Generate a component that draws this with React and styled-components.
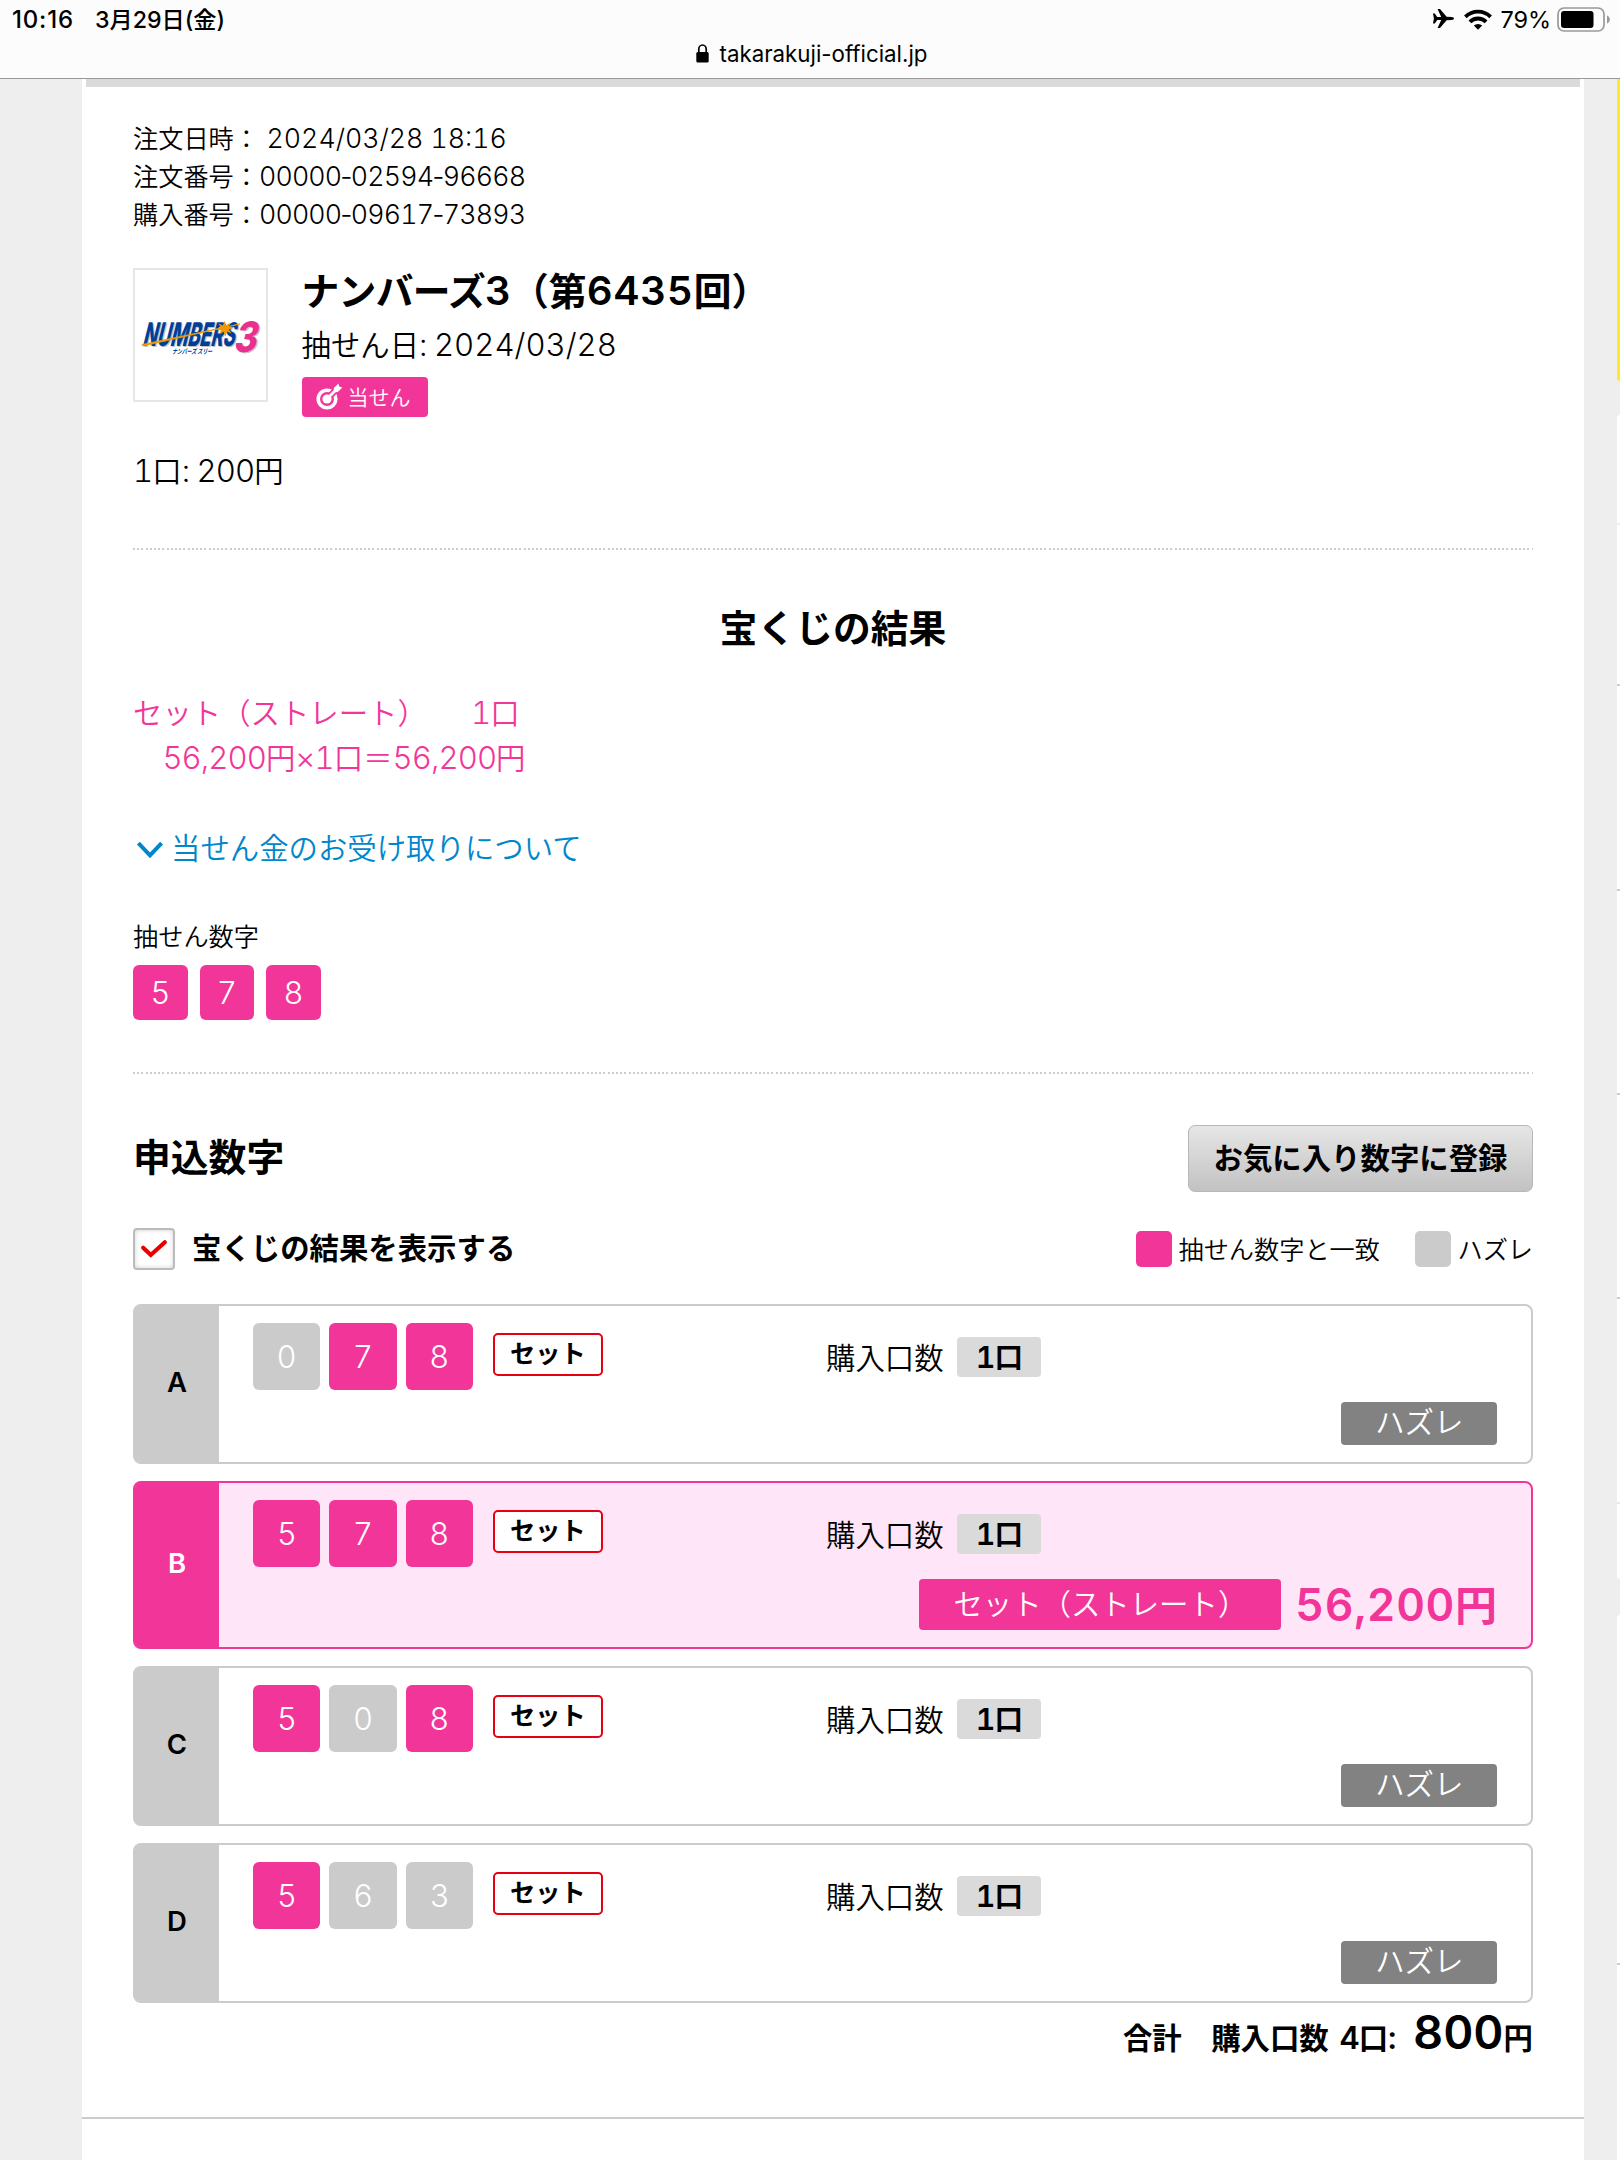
import React from 'react';
import styled, {createGlobalStyle} from 'styled-components';

const PINK = '#f23699';
const GRAY = '#cbcbcb';

const GlobalStyle = createGlobalStyle`
    * {
        box-sizing: border-box;
    }

    body {
        margin: 0;
        background-color: #eeeeee;
        color: #000000;
        font-family: "Noto Sans CJK JP", sans-serif;
        font-weight: 350;
        font-size: 29.4px;
    }

    h1, h2, p {
        margin: 0;
    }
`;

const Screen = styled.div`
    width: 1620px;
    height: 2160px;
    overflow: hidden;
    display: flex;
    flex-direction: column;
`;

// Latin digits, wider than the ones in the Japanese font
const Num = styled.span`
    font-family: Inter, sans-serif;
    font-size: ${props => props.$size || 1.06}em;
    letter-spacing: ${props => props.$gap ?? -0.03}em;
    margin-left: ${props => props.$left || 0}px;
    font-variant-numeric: tabular-nums;
    line-height: 0;
`;

const Hyphen = styled.span`
    margin: 0 -0.13em;
`;

const StatusBar = styled.header`
    flex: none;
    height: 79px;
    background-color: #fcfcfc;
    border-bottom: 1px solid #999999;
    font-size: 24px;
    font-weight: 500;
`;

const StatusRow = styled.div`
    display: flex;
    align-items: center;
    height: 38px;
    padding: 0 8.6px 0 12px;
`;

const Time = styled.span`
    width: 83px;
    font-family: Inter, sans-serif;
    letter-spacing: 0.8px;
`;

const StatusDate = styled.span`
    flex: 1;
    padding-bottom: 2px;
    font-family: Inter, "Noto Sans CJK JP", sans-serif;
    font-size: 23.2px;
`;

const StatusIcons = styled.div`
    display: flex;
    align-items: center;
    font-family: Inter, sans-serif;
    font-weight: 400;
    font-size: 23.5px;
`;

const WifiSlot = styled.span`
    display: flex;
    margin-left: 9px;
`;

const Percent = styled.span`
    width: 57px;
    margin-left: 8px;
`;

const Address = styled.div`
    display: flex;
    align-items: center;
    justify-content: center;
    gap: 10px;
    height: 31px;
    padding-left: 4px;
    font-family: Inter, sans-serif;
    font-weight: 400;
    font-size: 22.3px;
`;

const Body = styled.div`
    flex: 1;
    display: flex;
    padding-left: 82px;
    overflow: hidden;
`;

const Main = styled.main`
    width: 1502px;
    background-color: #ffffff;
`;

const TopStrip = styled.div`
    height: 8px;
    margin: 0 4px;
    background-color: #dadada;
`;

const Content = styled.div`
    padding: 31px 51px 58px;
    border-bottom: 2px solid #cccccc;
`;

const OrderLine = styled.p`
    font-size: 25.2px;
    line-height: 38px;
`;

const Product = styled.section`
    display: flex;
    align-items: flex-start;
    margin-top: 36px;
`;

const Thumb = styled.div`
    width: 134.5px;
    height: 134px;
    border: 2px solid #e6e6e6;
    margin-right: 34px;
`;

const Title = styled.h1`
    font-size: 37.8px;
    font-weight: 600;
    line-height: 42px;
`;

const TitleKana = styled.span`
    letter-spacing: -0.7px;
`;

const DrawDate = styled.p`
    margin-top: 11px;
    line-height: 44px;
`;

const WinBadge = styled.div`
    display: flex;
    align-items: center;
    width: 126px;
    height: 40px;
    margin-top: 12px;
    padding: 0 0 3px 14px;
    gap: 5px;
    border-radius: 4px;
    background-color: ${PINK};
    color: #ffffff;
    font-size: 21px;
`;

const UnitPrice = styled.p`
    margin-top: 30px;
    line-height: 44px;
`;

const Divider = styled.div`
    margin-top: ${props => props.$top}px;
    height: 2px;
    background: repeating-linear-gradient(90deg, #cccccc 0 2.1px, transparent 2.1px 4.2px);
`;

const ResultTitle = styled.h2`
    margin-top: 48px;
    font-size: 37.8px;
    font-weight: 600;
    line-height: 56px;
    text-align: center;
`;

const Prize = styled.div`
    margin-top: 35px;
    color: ${PINK};
    line-height: 44.5px;
`;

const PrizeUnits = styled.span`
    margin-left: 44px;
`;

const AboutLink = styled.a`
    display: flex;
    align-items: center;
    gap: 7px;
    margin-top: 46px;
    padding-left: 3px;
    line-height: 44px;
    color: #0086cc;
`;

const ChevronSlot = styled.span`
    display: flex;
    padding-top: 7px;
`;

const DrawLabel = styled.p`
    margin-top: 48px;
    font-size: 25.2px;
    line-height: 38px;
`;

const DrawDigits = styled.div`
    display: flex;
    gap: 12px;
    margin-top: 11px;
`;

const Digit = styled.span`
    display: flex;
    align-items: center;
    justify-content: center;
    width: ${props => props.$size}px;
    height: ${props => props.$size}px;
    border-radius: 6px;
    background-color: ${props => props.$hit ? PINK : GRAY};
    color: #ffffff;
    font-family: Inter, sans-serif;
    font-size: 31px;
`;

const SectionHead = styled.div`
    display: flex;
    align-items: center;
    justify-content: space-between;
    height: 67px;
    margin-top: 51px;
`;

const SectionTitle = styled.h2`
    font-size: 37.8px;
    font-weight: 600;
    line-height: 60px;
    padding-bottom: 6px;
`;

const FavoriteButton = styled.button`
    width: 345px;
    height: 67px;
    padding: 0 0 5px;
    border: 1px solid #b8b8b8;
    border-radius: 7px;
    background: linear-gradient(#e6e6e6, #c2c2c2);
    color: #000000;
    font: inherit;
    font-weight: 600;
`;

const Filter = styled.div`
    display: flex;
    align-items: center;
    height: 42px;
    margin: 36px 0 34px;
`;

const CheckBox = styled.span`
    display: flex;
    align-items: center;
    justify-content: center;
    width: 42px;
    height: 42px;
    border: 2px solid #bbbbbb;
    border-radius: 4px;
    background-color: #ffffff;
    box-shadow: inset 0 0 5px rgba(0, 0, 0, 0.18);
`;

const FilterLabel = styled.span`
    flex: 1;
    margin-left: 17px;
    padding-bottom: 5px;
    font-weight: 600;
`;

const Legend = styled.span`
    display: flex;
    align-items: center;
    gap: 6.5px;
    margin-left: 35px;
    font-size: 25.2px;
    line-height: 34px;

    &::before {
        content: '';
        width: 36px;
        height: 36px;
        border-radius: 5px;
        background-color: ${props => props.$hit ? PINK : GRAY};
    }
`;

const LegendText = styled.span`
    padding-bottom: 2px;
`;

const Entries = styled.div`
    display: flex;
    flex-direction: column;
    gap: 17px;
`;

const EntryCard = styled.div`
    display: flex;
    height: ${props => props.$win ? 168 : 160}px;
    border: 2px solid ${props => props.$win ? PINK : GRAY};
    border-radius: 8px;
    background-color: ${props => props.$win ? '#fee5f8' : '#ffffff'};
`;

const EntryLetter = styled.div`
    display: flex;
    align-items: center;
    justify-content: center;
    width: 84px;
    padding-bottom: 3px;
    border-radius: 5px 0 0 5px;
    background-color: ${props => props.$win ? PINK : GRAY};
    color: ${props => props.$win ? '#ffffff' : '#000000'};
    font-family: Inter, sans-serif;
    font-size: 27.5px;
    font-weight: 600;
`;

const EntryBody = styled.div`
    flex: 1;
    display: flex;
    flex-direction: column;
    padding: 16.6px 34px 0;
`;

const EntryTop = styled.div`
    display: flex;
    height: 67.2px;
`;

const EntryDigits = styled.div`
    display: flex;
    gap: 9.2px;
    width: 573px;
`;

const TypeTag = styled.span`
    width: 109.4px;
    height: 43px;
    margin: 10.4px 0 0 11px;
    border: 2px solid #e60012;
    border-radius: 5px;
    background-color: #ffffff;
    font-size: 25.2px;
    font-weight: 600;
    line-height: 34px;
    text-align: center;
`;

const Quantity = styled.div`
    display: flex;
    align-items: flex-start;
    gap: 13.8px;
    padding-top: 14.4px;
    line-height: 38px;
`;

const QuantityValue = styled.span`
    width: 84px;
    height: 40.5px;
    border-radius: 4px;
    background-color: #dadada;
    font-weight: 600;
    font-size: 28.6px;
    text-align: center;
`;

const EntryResult = styled.div`
    display: flex;
    justify-content: flex-end;
    margin-top: 12.6px;
`;

const ResultTag = styled.span`
    height: ${props => props.$win ? 51 : 42.5}px;
    padding: 0 ${props => props.$win ? 34 : 33.7}px;
    border-radius: 4px;
    background-color: ${props => props.$win ? PINK : '#828282'};
    color: #ffffff;
    line-height: ${props => props.$win ? 47 : 37}px;
`;

const Amount = styled.span`
    margin-left: 14px;
    color: ${PINK};
    font-size: 42px;
    font-weight: 600;
    line-height: 47px;
`;

const Total = styled.p`
    margin-top: 10px;
    font-weight: 600;
    line-height: 46px;
    text-align: right;
    white-space: pre;
`;

const Sidebar = styled.aside`
    width: 3px;
    margin-left: 33px;
`;

const BannerEdge = styled.div`
    height: 302px;
    margin-bottom: 34px;
    border-radius: 0 0 0 6px;
    background-color: #ffe92f;
`;

const SideCard = styled.div`
    overflow: hidden;
    margin-bottom: 36px;
    border-radius: 6px 0 0 6px;
    background-color: #ffffff;
`;

const SideItem = styled.div`
    height: ${props => props.$height}px;
    border-bottom: 2px solid ${props => props.$line || '#cccccc'};
`;

const LogoSvg = styled.svg`
    display: block;
    overflow: visible;
    font-family: Inter, sans-serif;
`;

const PlaneIcon = () => (
    <svg width="22" height="20" viewBox="0 0 22 20">
        <path
            d="M0 4.6H1.8L4.2 8H8.2L4.6 0H7L13.6 7.7L18.6 8C20.2 8.2 21 8.8 21 9.5S20.2 10.8 18.6 11L13.6 11.3L7 19H4.6L8.2 11H4.2L1.8 14.4H0L.9 9.5Z"
            fill="#000000"
        />
    </svg>
);

const WifiIcon = () => (
    <svg width="28" height="21" viewBox="0 0 28 21">
        <g fill="none" stroke="#000000" strokeWidth="3.8">
            <path d="M1.4 7.8A17.9 17.9 0 0 1 26.6 7.8" />
            <path d="M5.9 12.9A11.4 11.4 0 0 1 22.1 12.9" />
        </g>
        <path d="M14 20.8L9.8 16.6A6 6 0 0 1 18.2 16.6Z" fill="#000000" />
    </svg>
);

const BatteryIcon = () => (
    <svg width="54" height="25" viewBox="0 0 54 25">
        <rect x="1" y="1" width="46" height="23" rx="6" fill="none" stroke="#999999" strokeWidth="1.7" />
        <rect x="4" y="4" width="32.5" height="17" rx="3" fill="#000000" />
        <path d="M50 8.5C52 9.4 52.8 11 52.8 12.5S52 15.6 50 16.5Z" fill="#999999" />
    </svg>
);

const LockIcon = () => (
    <svg width="13" height="19" viewBox="0 0 13 19">
        <path d="M2.8 9V5.2A3.7 4.2 0 0 1 10.2 5.2V9" fill="none" stroke="#000000" strokeWidth="1.7" />
        <rect x="0.3" y="8" width="12.4" height="10.6" rx="1.6" fill="#000000" />
    </svg>
);

const TargetIcon = () => (
    <svg width="27" height="28" viewBox="0 0 27 28">
        <circle cx="11" cy="17" r="8.8" fill="none" stroke="#ffffff" strokeWidth="3.6" />
        <path d="M11 17L23 4.8" stroke={PINK} strokeWidth="6.4" />
        <circle cx="11" cy="17" r="4.6" fill="#ffffff" />
        <path d="M11 17L20 7.8" stroke="#ffffff" strokeWidth="2.8" />
        <path d="M18 10.2L17.8 6L22.4 1.4L23.2 4.6L26.4 5.4L21.8 10Z" fill="#ffffff" />
    </svg>
);

const ChevronIcon = () => (
    <svg width="28" height="18" viewBox="0 0 28 18">
        <path d="M2.4 2.2L14 14.4L25.6 2.2" fill="none" stroke="#0086cc" strokeWidth="4" />
    </svg>
);

const CheckIcon = () => (
    <svg width="28" height="20" viewBox="0 0 28 20">
        <path d="M3.2 8.8L10.8 16L24.8 3.2" fill="none" stroke="#eb0000" strokeWidth="4.2" strokeLinecap="round" />
    </svg>
);

const NumbersLogo = () => (
    <LogoSvg width="130" height="130" viewBox="0 0 130 130">
        <g transform="skewX(-14)" fontWeight="800">
            <text x="27.5" y="77" fontSize="32.6" textLength="92" lengthAdjust="spacingAndGlyphs" fill="#c4c4c4">NUMBERS</text>
            <text x="26" y="75.7" fontSize="32.6" textLength="92" lengthAdjust="spacingAndGlyphs" fill="#003f98">NUMBERS</text>
            <text x="119.5" y="83.5" fontSize="42" textLength="23" lengthAdjust="spacingAndGlyphs" fill="#c4c4c4">3</text>
            <text x="118" y="82" fontSize="42" textLength="23" lengthAdjust="spacingAndGlyphs" fill="#e9308f">3</text>
        </g>
        <path d="M7 74.5L105 54L8 76Z" fill="#f39800" stroke="#f39800" strokeWidth="0.8" />
        <path
            d="M89.7 51L91 55.4L95 52.6L93.4 56.6L98.6 57.6L93.8 59.4L96.6 63.6L92 61.4L90.4 66.4L88.6 61.8L84.4 64.6L86 60.2L81.4 59.6L85.8 57.4L83.4 53.2L87.8 55.4Z"
            fill="#f39800"
        />
        <text
            transform="skewX(-14)"
            x="58"
            y="84.5"
            fontFamily="Noto Sans CJK JP, sans-serif"
            fontSize="7"
            fontWeight="700"
            textLength="40"
            lengthAdjust="spacingAndGlyphs"
            fill="#003f98"
        >
            ナンバーズ スリー
        </text>
    </LogoSvg>
);

const entries = [
    {letter: 'A', digits: [['0', false], ['7', true], ['8', true]]},
    {letter: 'B', digits: [['5', true], ['7', true], ['8', true]], win: true},
    {letter: 'C', digits: [['5', true], ['0', false], ['8', true]]},
    {letter: 'D', digits: [['5', true], ['6', false], ['3', false]]},
];

const Code = ({parts}) => (
    <Num>
        {parts.map((part, index) => (
            <React.Fragment key={part}>
                {index > 0 && <Hyphen>-</Hyphen>}
                {part}
            </React.Fragment>
        ))}
    </Num>
);

const Entry = ({letter, digits, win}) => (
    <EntryCard $win={win}>
        <EntryLetter $win={win}>{letter}</EntryLetter>
        <EntryBody>
            <EntryTop>
                <EntryDigits>
                    {digits.map(([value, hit], index) => (
                        <Digit key={index} $size={67.2} $hit={hit}>{value}</Digit>
                    ))}
                    <TypeTag>セット</TypeTag>
                </EntryDigits>
                <Quantity>
                    <span>購入口数</span>
                    <QuantityValue><Num>1</Num>口</QuantityValue>
                </Quantity>
            </EntryTop>
            <EntryResult>
                <ResultTag $win={win}>{win ? 'セット（ストレート）' : 'ハズレ'}</ResultTag>
                {win && <Amount><Num $gap={0.014}>56,200</Num>円</Amount>}
            </EntryResult>
        </EntryBody>
    </EntryCard>
);

const App = () => (
    <Screen>
        <GlobalStyle />
        <StatusBar>
            <StatusRow>
                <Time>10:16</Time>
                <StatusDate>3月29日(金)</StatusDate>
                <StatusIcons>
                    <PlaneIcon />
                    <WifiSlot><WifiIcon /></WifiSlot>
                    <Percent>79%</Percent>
                    <BatteryIcon />
                </StatusIcons>
            </StatusRow>
            <Address>
                <LockIcon />
                takarakuji-official.jp
            </Address>
        </StatusBar>

        <Body>
            <Main>
                <TopStrip />
                <Content>
                    <OrderLine>注文日時： <Num $gap={0} $left={2}>2024/03/28 18:16</Num></OrderLine>
                    <OrderLine>注文番号：<Code parts={['00000', '02594', '96668']} /></OrderLine>
                    <OrderLine>購入番号：<Code parts={['00000', '09617', '73893']} /></OrderLine>

                    <Product>
                        <Thumb><NumbersLogo /></Thumb>
                        <div>
                            <Title>
                                <TitleKana>ナンバーズ</TitleKana><Num $gap={0}>3</Num>（第<Num $gap={0.022}>6435</Num>回）
                            </Title>
                            <DrawDate>抽せん日<Num>: </Num><Num $gap={0}>2024/03/28</Num></DrawDate>
                            <WinBadge><TargetIcon />当せん</WinBadge>
                        </div>
                    </Product>
                    <UnitPrice><Num>1</Num>口<Num>: 200</Num>円</UnitPrice>

                    <Divider $top={57} />

                    <ResultTitle>宝くじの結果</ResultTitle>
                    <Prize>
                        <p>セット（ストレート）<PrizeUnits><Num>1</Num>口</PrizeUnits></p>
                        <p>　<Num>56,200</Num>円<Num>×1</Num>口＝<Num>56,200</Num>円</p>
                    </Prize>
                    <AboutLink><ChevronSlot><ChevronIcon /></ChevronSlot>当せん金のお受け取りについて</AboutLink>

                    <DrawLabel>抽せん数字</DrawLabel>
                    <DrawDigits>
                        <Digit $size={54.6} $hit>5</Digit>
                        <Digit $size={54.6} $hit>7</Digit>
                        <Digit $size={54.6} $hit>8</Digit>
                    </DrawDigits>

                    <Divider $top={52.4} />

                    <SectionHead>
                        <SectionTitle>申込数字</SectionTitle>
                        <FavoriteButton>お気に入り数字に登録</FavoriteButton>
                    </SectionHead>
                    <Filter>
                        <CheckBox><CheckIcon /></CheckBox>
                        <FilterLabel>宝くじの結果を表示する</FilterLabel>
                        <Legend $hit><LegendText>抽せん数字と一致</LegendText></Legend>
                        <Legend><LegendText>ハズレ</LegendText></Legend>
                    </Filter>

                    <Entries>
                        {entries.map(entry => <Entry key={entry.letter} {...entry} />)}
                    </Entries>
                    <Total>
                        合計　購入口数 <Num $left={4}>4</Num>口<Num>: </Num><Num $size={1.59} $gap={0} $left={10}>800</Num>円
                    </Total>
                </Content>
            </Main>
            <Sidebar>
                <BannerEdge />
                <SideCard>
                    <SideItem $height={110} $line="#eeeeee" />
                    <SideItem $height={161} />
                    <SideItem $height={205} />
                    <SideItem $height={204} />
                    <SideItem $height={204} />
                    <SideItem $height={205} $line="#e8e8e8" />
                    <SideItem $height={75} $line="#fafafa" />
                </SideCard>
                <SideCard>
                    <SideItem $height={350} />
                    <SideItem $height={300} />
                </SideCard>
            </Sidebar>
        </Body>
    </Screen>
);

export default App;
